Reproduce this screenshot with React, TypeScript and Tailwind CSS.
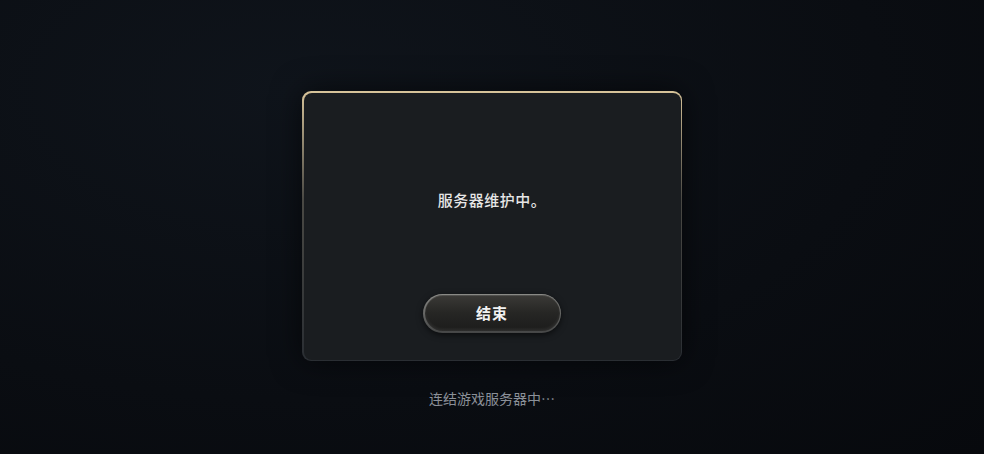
export default function App() {
  return (
    <div
      className="flex h-[454px] w-full flex-col items-center bg-[radial-gradient(ellipse_at_30%_20%,#0f141b_0%,#0a0d12_60%,#07090d_100%)] pt-[91px]"
      style={{ fontFamily: '"Noto Sans CJK SC", "Noto Sans", sans-serif' }}
    >
      {/* dialog with a warm gold rim that fades down the sides */}
      <div className="rounded-[9px] bg-gradient-to-b from-[#d8c49a] via-[#4a4944] via-40% to-[#2a2e33] p-[1.5px] shadow-[0_0_30px_rgba(0,0,0,0.6)]">
        <div className="flex h-[267px] w-[377px] flex-col items-center rounded-[8px] bg-[#1a1d20]">
          <p className="mt-[97px] text-[15px] font-medium leading-5 tracking-[0.5px] text-[#e6e6e6]">
            服务器维护中。
          </p>
          <button className="mt-[84px] rounded-full bg-gradient-to-b from-[#8a8a86] to-[#454646] p-[1.5px] shadow-[0_2px_6px_rgba(0,0,0,0.6)]">
            <span className="flex h-[36px] w-[135px] items-center justify-center rounded-full bg-gradient-to-b from-[#3b3a37] via-[#262624] to-[#1c1c1b] text-[15px] font-bold tracking-[1px] text-[#f2f2f2] shadow-[inset_0_1px_0_rgba(255,255,255,0.12),inset_0_-2px_3px_rgba(255,255,255,0.08)]">
              结束
            </span>
          </button>
        </div>
      </div>
      <p className="mt-[27px] text-[14px] leading-5 text-[#8b9098]">连结游戏服务器中…</p>
    </div>
  );
}
